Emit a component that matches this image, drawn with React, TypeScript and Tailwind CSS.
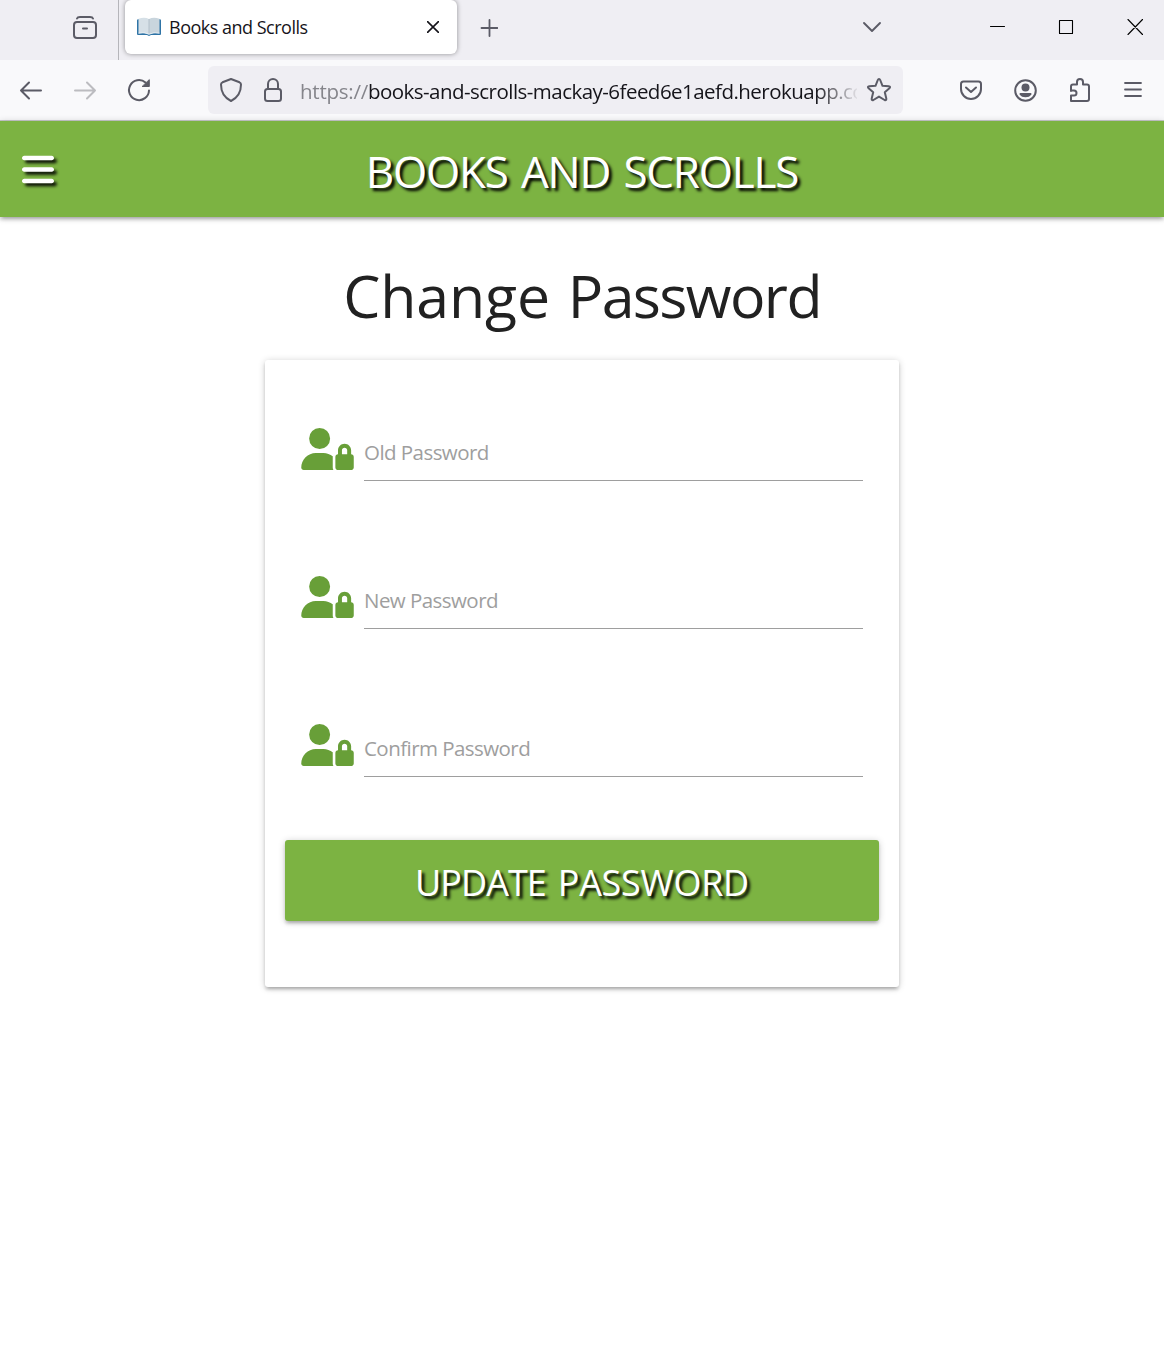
import React from "react";
import { FaBars, FaUserLock } from "react-icons/fa6";

const stroke = {
  fill: "none",
  stroke: "currentColor",
  strokeWidth: 2,
  strokeLinecap: "round" as const,
  strokeLinejoin: "round" as const,
};

function Icon({ children, className = "" }: { children: React.ReactNode; className?: string }) {
  return (
    <svg viewBox="0 0 24 24" className={`size-6 shrink-0 overflow-visible ${className}`} {...stroke}>
      {children}
    </svg>
  );
}

function BookIcon() {
  return (
    <svg viewBox="0 0 24 24" className="size-6 shrink-0">
      <path d="M0 5.500Q0 4.200 1.200 4.200H22.800Q24 4.200 24 5.500V18.800Q24 20 23 20H14L12 21L10 20H1Q0 20 0 18.800Z" fill="#2f74a6" />
      <path d="M1.500 3.800Q7.500 1.800 12 4V19.500Q7.500 17.200 1.500 18.400Z" fill="#d6e0e7" />
      <path d="M22.500 3.800Q16.500 1.800 12 4V19.500Q16.500 17.200 22.500 18.400Z" fill="#c9d5dd" />
      <path d="M12 4V19" stroke="#b3c0ca" strokeWidth="1" />
      <path d="M1.500 18.200Q7.500 16.800 12 19.200Q16.500 16.800 22.500 18.200" fill="none" stroke="#eef3f6" strokeWidth="0.8" />
    </svg>
  );
}

function TabStrip() {
  return (
    <div className="flex h-[60px] bg-[#efeef3] text-[#5b5b66]">
      <div className="flex w-[119px] items-center border-r border-[#b5b5ba] pb-[8px] pl-[73px]">
        <Icon>
          <rect x="1" y="8" width="22" height="16" rx="3" />
          <path d="M4 4.500Q4.500 3 7 3H17Q19.500 3 20 4.500M10 14.500H14" />
        </Icon>
      </div>
      <div className="ml-[6px] flex h-[54px] w-[332px] items-center rounded-[6px] bg-white pl-3 shadow-[0_0_5px_rgba(0,0,0,0.4)]">
        <BookIcon />
        <span className="ml-2 w-[258px] shrink-0 whitespace-nowrap text-[18px] tracking-[-0.5px] text-[#15141a]">Books and Scrolls</span>
        <svg viewBox="0 0 12 12" className="size-3 shrink-0 text-[#15141a]" {...stroke} strokeWidth={1.6}>
          <path d="M.5 .5L11.500 11.500M11.500 .5L.5 11.500" />
        </svg>
      </div>
      <svg viewBox="0 0 18 18" className="ml-[23px] mt-[19px] size-[18px]" {...stroke} strokeWidth={1.8}>
        <path d="M9.500 1V17M1.500 9H17.500" />
      </svg>
      <svg viewBox="0 0 20 12" className="ml-[364px] mt-[21px] h-3 w-5" {...stroke} strokeWidth={1.9}>
        <path d="M2 2L10 10L18 2" />
      </svg>
      <svg viewBox="0 0 154 18" className="ml-[108px] mt-[18px] h-[18px] w-[154px] shrink-0 text-black" {...stroke} strokeWidth={1.1}>
        <path d="M.5 8.500H14.500M69.500 2.500H82.500V15.500H69.500ZM138 1.500L152.500 16.500M152.500 1.500L138 16.500" />
      </svg>
    </div>
  );
}

function Toolbar() {
  return (
    <div className="flex h-[61px] items-center border-b border-[#c8c8cc] bg-[#f9f9fb] text-[#5b5b66]">
      <Icon className="ml-[19px]">
        <path d="M22 12.500H2M10 4.500L2 12.500L10 20.500" />
      </Icon>
      <Icon className="ml-[30px] text-[#bcbcc0]">
        <path d="M2 12.500H22M14 4.500L22 12.500L14 20.500" />
      </Icon>
      <Icon className="ml-[30px]">
        <path d="M22 12.500A10 10 0 1 1 18.500 4.500" />
        <path d="M22.300 2V8.500H15.500Z" fill="currentColor" strokeWidth="1" />
      </Icon>
      <div className="ml-[57px] flex h-12 w-[695px] items-center rounded-md bg-[#efeef3]">
        <Icon className="ml-[11px]">
          <path d="M12 1L20.500 4.300Q22 5 22 6.500Q22 18 12 23Q2 18 2 6.500Q2 5 3.500 4.300Z" />
        </Icon>
        <Icon className="ml-[18px]">
          <rect x="4" y="11" width="16" height="12" rx="2.500" />
          <path d="M7 11V6A5 5 0 0 1 17 6V11" />
        </Icon>
        <div className="ml-[15px] w-[557px] overflow-hidden whitespace-nowrap pt-0.5 text-[20.5px] tracking-[-0.53px] text-[#15141a] [mask-image:linear-gradient(to_right,black_515px,transparent_560px)]">
          <span className="tracking-[-0.25px] text-[#85858b]">https://</span>books-and-scrolls-mackay-6feed6e1aefd.herokuapp.com
        </div>
        <Icon className="ml-[10px]">
          <path d="M12 1Q12.800 1 13.200 2L15.500 7.800L21.700 8.200Q24 8.600 22.400 10.200L17.800 14.200L19.300 20.500Q19.500 22.700 17.600 22L12 18.600L6.400 22Q4.500 22.700 4.700 20.500L6.200 14.200L1.600 10.200Q0 8.600 2.300 8.200L8.500 7.800L10.800 2Q11.200 1 12 1Z" />
        </Icon>
      </div>
      <Icon className="ml-[56px]">
        <path d="M4.500 3.500H19.500Q22 3.500 22 6V11A10 10 0 0 1 2 11V6Q2 3.500 4.500 3.500ZM7 9.500L12 14L17 9.500" />
      </Icon>
      <Icon className="ml-[31px]">
        <circle cx="11.500" cy="12.500" r="10.300" />
        <circle cx="11.500" cy="9.500" r="4" fill="currentColor" stroke="none" />
        <path d="M6.300 15H16.700Q18 15.300 17.300 16.800Q15.500 19.300 11.500 19.300Q7.500 19.300 5.700 16.800Q5 15.300 6.300 15Z" fill="currentColor" stroke="none" />
      </Icon>
      <Icon className="ml-[30px]">
        <path d="M3 13V8.500Q3 6.500 5 6.500H9V4A3 3 0 0 1 15 4V6.500H19Q21 6.500 21 8.500V21Q21 23 19 23H3V17.500H6A2.250 2.250 0 0 0 6 12.500H3" />
      </Icon>
      <svg viewBox="0 0 18 18" className="ml-8 size-[18px]" {...stroke} strokeWidth={1.8}>
        <path d="M1 2H17M1 8.500H17M1 15H17" />
      </svg>
    </div>
  );
}

function PasswordField({ label }: { label: string }) {
  return (
    <label className="flex h-[148px] items-start">
      <FaUserLock className="mt-[11px] h-[42px] w-[53px] text-[#689f38]" />
      <span className="ml-[10px] flex h-[64px] w-[499px] items-center border-b border-[#9e9e9e] pt-[8px] text-[20.5px] tracking-[-0.55px] text-[#9e9e9e]">
        {label}
      </span>
    </label>
  );
}

export default function App() {
  return (
    <div className="min-h-[1354px] w-[1164px] overflow-hidden bg-white font-['Open_Sans','Noto_Sans',sans-serif]">
      <TabStrip />
      <Toolbar />
      <header className="grid h-24 grid-cols-[200px_1fr_200px] items-center bg-[#7cb342] text-white shadow-[0_3px_3px_0_rgba(0,0,0,0.14),0_4px_2px_-3px_rgba(0,0,0,0.12),0_1px_7px_0_rgba(0,0,0,0.2)]">
        <FaBars className="ml-[22px] h-[37px] w-8 drop-shadow-[3px_3px_1.5px_rgba(0,0,0,0.9)]" />
        <h1 className="whitespace-nowrap pt-1 text-center text-[44px] leading-none tracking-[-1.2px] [word-spacing:3px] [text-shadow:3px_3px_3px_#000]">BOOKS AND SCROLLS</h1>
      </header>
      <main className="flex flex-col items-center">
        <h2 className="mt-[42px] whitespace-nowrap text-[59px] leading-[72px] tracking-[-1.6px] text-[#212121] [word-spacing:4px]">
          <span className="tracking-[-0.1px]">Change</span> Password
        </h2>
        <form className="mt-[29px] flex h-[627px] w-[634px] flex-col rounded-[3px] bg-white px-5 pt-[57px] shadow-[0_3px_3px_0_rgba(0,0,0,0.14),0_4px_2px_-3px_rgba(0,0,0,0.12),0_1px_7px_0_rgba(0,0,0,0.2)]">
          <div className="h-[423px] shrink-0 px-4">
            <PasswordField label="Old Password" />
            <PasswordField label="New Password" />
            <PasswordField label="Confirm Password" />
          </div>
          <button type="button" className="h-[81px] shrink-0 whitespace-nowrap rounded-[3px] bg-[#7cb342] pt-[5px] text-[36px] leading-none tracking-[-0.3px] text-white shadow-[0_3px_3px_0_rgba(0,0,0,0.14),0_4px_2px_-3px_rgba(0,0,0,0.12),0_1px_7px_0_rgba(0,0,0,0.2)] [word-spacing:3px] [text-shadow:3px_3px_3px_#000]">
            <span className="tracking-[-1px]">UPDATE</span> PASSWORD
          </button>
        </form>
      </main>
    </div>
  );
}
